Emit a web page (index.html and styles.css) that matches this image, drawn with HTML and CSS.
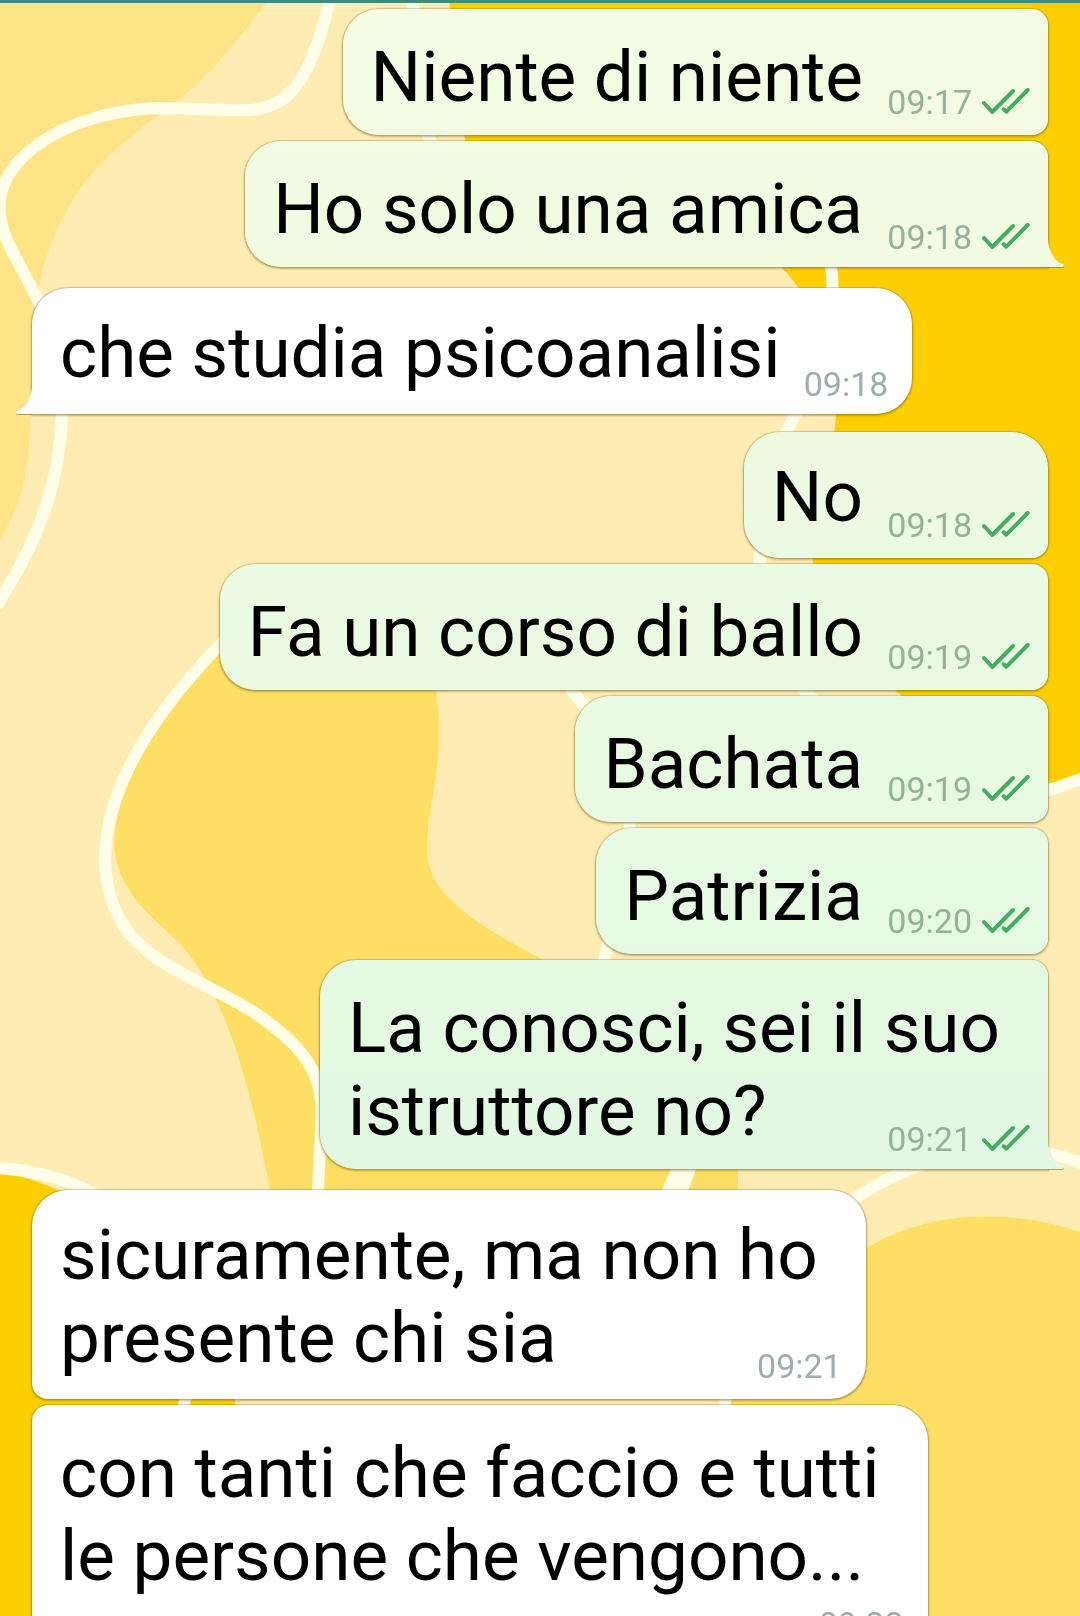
FILE: index.html
```html
<!DOCTYPE html>
<html lang="it">
<head>
    <meta charset="UTF-8">
    <meta name="viewport" content="width=device-width, initial-scale=1.0">
    <title>Chat</title>
    <link rel="stylesheet" href="styles.css">
</head>
<body>
    <!-- Wallpaper -->
    <svg class="wallpaper" viewBox="0 0 1080 1616" preserveAspectRatio="xMidYMid slice" aria-hidden="true">
        <rect width="1080" height="1616" fill="#ffecb3"/>
        <path fill="#fee486" d="M0 0H268C242 35 215 70 179 100C140 128 90 165 69 207C50 240 40 270 38 300C34 350 32 390 30 430C28 480 18 510 0 540Z"/>
        <path fill="#fecf00" d="M449 0L465 140C480 220 700 190 781 267C815 300 838 360 836 415C833 470 805 510 813 562C822 620 860 665 900 694C960 765 1010 800 1080 776V0Z"/>
        <path fill="#fede63" d="M218 650C160 715 115 785 114 843C116 890 150 915 179 943C230 995 255 1110 270 1190L280 1300H738V1170C720 1040 620 990 537 957C490 930 427 900 427 850C427 810 439 780 439 735C439 710 437 700 436 690L380 600Z"/>
        <path fill="#fecf00" d="M0 1172C60 1180 230 1260 235 1402L200 1616H0Z"/>
        <path fill="#fede63" d="M1080 1232C1000 1205 920 1215 867 1248C780 1300 735 1350 731 1402V1616H1080Z"/>
        <g fill="none" stroke="#fffee8" stroke-width="12">
            <path d="M330 0C314 62 298 108 250 110C215 111 190 108 158 108C100 110 50 130 22 158C-10 190 -4 225 17 260L38 300C55 340 66 370 62 415C60 480 40 540 -4 606"/>
            <path d="M412 0C420 60 418 110 430 140C460 230 800 180 831 267C838 310 820 370 795 415C770 460 758 510 760 562C762 620 780 670 810 696C880 770 980 810 1050 790L1084 778"/>
            <path d="M603 964C615 920 622 880 629 828C640 780 610 740 572 690C480 560 300 560 212 653C140 730 105 800 105 860C107 960 190 970 258 1015C340 1073 320 1100 318 1192"/>
            <path d="M-4 1168C20 1169 60 1175 92 1193C180 1250 200 1330 183 1410"/>
            <path stroke-width="24" d="M688 1150C684 1170 680 1180 670 1200"/>
            <path d="M1084 1164C1010 1135 930 1150 857 1197C780 1260 730 1330 724 1410"/>
        </g>
    </svg>

    <!-- Tick marks used by every sent message -->
    <svg class="defs" aria-hidden="true">
        <symbol id="ticks" viewBox="0 0 48 26">
            <path d="M2 15L10.300 24L31 3M21.700 21.300L24.300 23.700L45.700 2" fill="none" stroke="#43ad60" stroke-width="4" stroke-linecap="round" stroke-linejoin="round"/>
        </symbol>
    </svg>

    <div class="topbar"></div>
    <main class="chat">
        <section class="group out">
            <article class="bubble">
                <p>Niente di niente</p>
                <div class="meta"><time>09:17</time><svg><use href="#ticks"/></svg></div>
            </article>
            <article class="bubble tail">
                <p>Ho solo una amica</p>
                <div class="meta"><time>09:18</time><svg><use href="#ticks"/></svg></div>
            </article>
        </section>

        <section class="group in">
            <article class="bubble first tail">
                <p>che studia psicoanalisi</p>
                <div class="meta"><time>09:18</time></div>
            </article>
        </section>

        <section class="group out">
            <article class="bubble first">
                <p>No</p>
                <div class="meta"><time>09:18</time><svg><use href="#ticks"/></svg></div>
            </article>
            <article class="bubble">
                <p>Fa un corso di ballo</p>
                <div class="meta"><time>09:19</time><svg><use href="#ticks"/></svg></div>
            </article>
            <article class="bubble">
                <p>Bachata</p>
                <div class="meta"><time>09:19</time><svg><use href="#ticks"/></svg></div>
            </article>
            <article class="bubble">
                <p>Patrizia</p>
                <div class="meta"><time>09:20</time><svg><use href="#ticks"/></svg></div>
            </article>
            <article class="bubble tail">
                <p>La conosci, sei il suo<br>istruttore no?</p>
                <div class="meta"><time>09:21</time><svg><use href="#ticks"/></svg></div>
            </article>
        </section>

        <section class="group in">
            <article class="bubble first">
                <p>sicuramente, ma non ho<br>presente chi sia</p>
                <div class="meta"><time>09:21</time></div>
            </article>
            <article class="bubble below">
                <p>con tanti che faccio e tutti<br>le persone che vengono...</p>
                <div class="meta"><time>09:22</time></div>
            </article>
        </section>
    </main>
</body>
</html>
```
FILE: styles.css
```css
* {
    box-sizing: border-box;
}
body, html {
    margin: 0;
    padding: 0;
    height: 100%;
    overflow: hidden;
    font-family: Roboto, "Liberation Sans", sans-serif;
}
.wallpaper {
    position: fixed;
    top: 0;
    left: 0;
    width: 100%;
    height: 100%;
    z-index: -1;
}
.defs {
    position: absolute;
    width: 0;
    height: 0;
}
.topbar {
    height: 3px;
    background: #43897e;
}
.chat {
    padding: 6px 32px 0;
}

/* Groups of messages from the same person */
.group {
    display: flex;
    flex-direction: column;
    gap: 6px;
}
.group.out {
    align-items: flex-end;
}
.group.in {
    align-items: flex-start;
}
.group + .group.in {
    margin-top: 21px;
}
.group + .group.out {
    margin-top: 18px;
}

/* Bubbles: text and time share one grid cell */
.bubble {
    position: relative;
    display: grid;
    padding: 26px 48px 17px 28px;
    border-radius: 36px;
    background: #fff;
    box-shadow: 0 0 1px 1px rgba(110, 100, 40, 0.2), 0 1px 2px 1px rgba(110, 90, 20, 0.4);
}
.out .bubble {
    border-radius: 36px 16px 16px 36px;
    background: linear-gradient(#f4fce2, #e2f8e2 1170px) fixed;
}
.in .bubble {
    border-radius: 16px 36px 36px 16px;
}
.bubble.first {
    padding-top: 23px;
    padding-bottom: 20px;
}
.out .bubble.first {
    border-top-right-radius: 36px;
}
.in .bubble.first {
    border-top-left-radius: 36px;
}
.out .bubble.tail {
    border-bottom-right-radius: 0;
}
.in .bubble.tail {
    border-bottom-left-radius: 0;
}

/* Tail, with a darker copy under it as its shadow */
.bubble.tail::before,
.bubble.tail::after {
    content: "";
    position: absolute;
    bottom: 0;
    width: 17px;
    height: 27px;
    background: inherit;
}
.bubble.tail::before {
    bottom: -1px;
    background: rgba(110, 90, 20, 0.5);
}
.out .bubble.tail::before,
.out .bubble.tail::after {
    left: 100%;
    clip-path: path("M0 0C1 12 7 22 15 24Q17 25 15 27H0Z");
}
.in .bubble.tail::before,
.in .bubble.tail::after {
    right: 100%;
    clip-path: path("M17 0C16 12 10 22 2 24Q0 25 2 27H17Z");
}

.bubble p {
    grid-area: 1 / 1;
    margin: 0;
    font-size: 71px;
    line-height: 83px;
    color: #000;
    white-space: nowrap;
}
/* keeps the last line clear of the time */
.bubble p::after {
    content: "";
    display: inline-block;
    width: 84px;
}
.out .bubble p::after {
    width: 137px;
}
.bubble.below p {
    padding-bottom: 43px;
}
.bubble.below p::after {
    display: none;
}

.meta {
    grid-area: 1 / 1;
    align-self: end;
    justify-self: end;
    display: flex;
    align-items: center;
    gap: 10px;
    margin: 0 -24px -4px 0;
    font-size: 34px;
    line-height: 40px;
    color: #9eadaf;
}
.out .meta {
    margin-right: -30px;
    color: #94b199;
}
.first .meta,
.tail .meta {
    margin-bottom: -7px;
}
.first.tail .meta {
    margin-bottom: -10px;
}
.meta svg {
    width: 48px;
    height: 26px;
    margin-bottom: 2px;
}
```
